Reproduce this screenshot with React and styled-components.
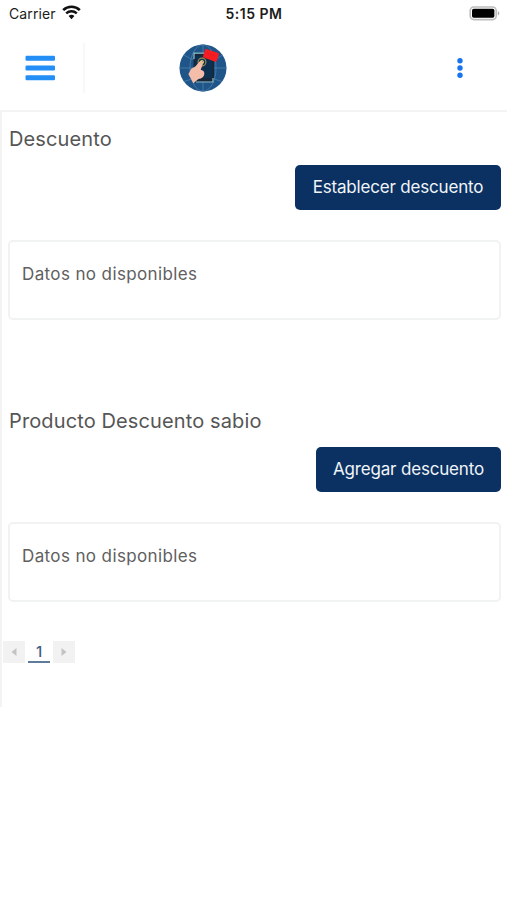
import styled, { createGlobalStyle } from "styled-components";

const GlobalStyle = createGlobalStyle`
  * {
    box-sizing: border-box;
  }

  body {
    margin: 0;
    background: #ffffff;
    font-family: Inter, "Liberation Sans", sans-serif;
  }
`;

const Screen = styled.div`
  min-height: 900px;
  background: #ffffff;
`;

const StatusBar = styled.div`
  display: grid;
  grid-template-columns: 1fr auto 1fr;
  align-items: center;
  height: 27px;
  padding: 0 7px 0 9px;
  color: #1c1c1c;
`;

const Carrier = styled.div`
  display: flex;
  align-items: center;
  gap: 6px;
  font-size: 14px;
  letter-spacing: 0.1px;

  svg {
    margin-top: -2px;
  }
`;

const Clock = styled.div`
  margin-left: -1px;
  font-size: 14px;
  font-weight: 600;
  letter-spacing: 0.5px;
`;

const BatteryIcon = styled.svg`
  justify-self: end;
`;

const Header = styled.header`
  display: grid;
  grid-template-columns: 85px 1fr 94px;
  align-items: center;
  height: 85px;
  padding-bottom: 2px;
  border-bottom: 2px solid #f3f3f3;
`;

const MenuButton = styled.button`
  display: flex;
  align-items: center;
  height: 50px;
  padding: 0 0 0 25px;
  border: 0;
  border-right: 2px solid #f8f8f8;
  background: none;
`;

const LogoWrapper = styled.div`
  display: flex;
  padding-left: 94px;
`;

const MoreButton = styled.button`
  display: flex;
  justify-content: center;
  padding: 0;
  border: 0;
  background: none;
`;

const Content = styled.main`
  height: 595px;
  border-left: 2px solid #f3f3f3;
`;

const Section = styled.section`
  height: 282px;
  padding: 13px 6px 0 6px;
`;

const Title = styled.h2`
  margin: 0 0 12px 1px;
  font-size: 20px;
  font-weight: 400;
  line-height: 28px;
  letter-spacing: 0.12px;
  color: #565656;
`;

const Actions = styled.div`
  display: flex;
  justify-content: flex-end;
`;

const Button = styled.button`
  width: ${({ $width }) => $width};
  height: 45px;
  padding: 0 0 1px;
  border: 0;
  border-radius: 5px;
  background: #0a3161;
  color: #f0f4f8;
  font-family: inherit;
  font-size: 17px;
  letter-spacing: -0.18px;
  white-space: nowrap;
`;

const Card = styled.div`
  height: 80px;
  margin-top: 30px;
  padding: 20px 12px;
  border: 2px solid #f1f2f2;
  border-radius: 5px;
  font-size: 17px;
  line-height: 24px;
  letter-spacing: 0.38px;
  color: #606060;
`;

const Pagination = styled.nav`
  display: flex;
  gap: 3px;
  margin-top: -35px;
  padding-left: 1px;
`;

const PageArrow = styled.button`
  display: flex;
  align-items: center;
  justify-content: center;
  width: 22px;
  height: 22px;
  padding: 0;
  border: 0;
  background: #f2f2f3;
`;

const PageNumber = styled.span`
  width: 22px;
  height: 22px;
  border-bottom: 2px solid #5d7c9c;
  color: #405b80;
  font-size: 15px;
  font-weight: 500;
  line-height: 22px;
  text-align: center;
`;

function WifiIcon() {
  return (
    <svg width="19" height="15" viewBox="0 0 19 15" fill="none">
      <path d="M1.2 5.1a12 12 0 0 1 16.6 0" stroke="#111" strokeWidth="2.7" />
      <path d="M4.2 8.3a7.7 7.7 0 0 1 10.6 0" stroke="#111" strokeWidth="2.4" />
      <path d="M6.6 11.1a4.2 4.2 0 0 1 5.8 0L9.5 14.2z" fill="#111" />
    </svg>
  );
}

function Battery() {
  return (
    <BatteryIcon width="31" height="15" viewBox="0 0 31 15">
      <rect x="1.2" y="1" width="26" height="12.6" rx="3.6" fill="#fff" stroke="#bdbdbd" strokeWidth="1.6" />
      <rect x="3" y="2.8" width="22.4" height="9" rx="1.7" fill="#000" />
      <path d="M28.8 5.2c2 .7 2 3.5 0 4.2z" fill="#adadad" />
    </BatteryIcon>
  );
}

function MenuIcon() {
  return (
    <svg width="31" height="26" viewBox="0 0 31 26" fill="#238ff6">
      <rect x="0.5" y="0.8" width="29.5" height="5" rx="1.2" />
      <rect x="0.5" y="10.5" width="29.5" height="5" rx="1.2" />
      <rect x="0.5" y="20.2" width="29.5" height="5" rx="1.2" />
    </svg>
  );
}

function Logo() {
  return (
    <svg width="48" height="48" viewBox="0 0 48 48">
      <circle cx="24" cy="24" r="23.5" fill="#1f5589" />
      <g fill="none" stroke="#4b80ab" strokeWidth="0.8">
        <path d="M.5 24h47M24 .5v47M5 11q7 5 12 5M43.5 11q-5 4-10 5M5 37.5q19-8 38 0" />
        <ellipse cx="24" cy="24" rx="13" ry="23.2" />
      </g>
      <rect x="14.5" y="8.5" width="20.5" height="30" rx="1.8" fill="#17283d" />
      <rect x="16.5" y="12" width="16.8" height="22" fill="#0c3150" />
      <path d="M15 15V9.2h12M17 38h17v-4" fill="none" stroke="#8fc6d8" strokeWidth="1.2" />
      <circle cx="23" cy="18" r="3.9" fill="none" stroke="#9d8a50" strokeWidth="1.2" />
      <path
        d="M20.4 17.8c1.5-2 4.5-.6 3.7 1.8l-2.4 6.2 2.4 1c1.8 1.2 1.6 4.5-.1 6.2-1.2 1.3-3.1 1.7-4.9 2.2l-4.7 4-5-9 2.6-5.3 4.6-2.6z"
        fill="#f4bdaa"
      />
      <circle cx="23" cy="18" r="1.7" fill="none" stroke="#dcc281" strokeWidth="0.9" />
      <path d="m27.5 4.9 11.6 4q1.2.4.8 1.6l-2.2 6.4q-.4 1.2-1.6.8l-11.4-4.2q-1-.4-.6-1.5l2-6.3q.4-1.2 1.4-.8z" fill="#f51c22" />
      <path d="m28.2 9.2 8.2 3" stroke="#d41c24" strokeWidth="1" strokeDasharray="2 1" />
    </svg>
  );
}

function MoreIcon() {
  return (
    <svg width="8" height="22" viewBox="0 0 8 22" fill="#1675ee">
      <circle cx="4" cy="3.7" r="2.7" />
      <circle cx="4" cy="11" r="2.7" />
      <circle cx="4" cy="18.3" r="2.7" />
    </svg>
  );
}

function DiscountSection({ title, action, width }) {
  return (
    <Section>
      <Title>{title}</Title>
      <Actions>
        <Button type="button" $width={width}>
          {action}
        </Button>
      </Actions>
      <Card>Datos no disponibles</Card>
    </Section>
  );
}

function App() {
  return (
    <>
      <GlobalStyle />
      <Screen>
        <StatusBar>
          <Carrier>
            Carrier
            <WifiIcon />
          </Carrier>
          <Clock>5:15 PM</Clock>
          <Battery />
        </StatusBar>

        <Header>
          <MenuButton type="button">
            <MenuIcon />
          </MenuButton>
          <LogoWrapper>
            <Logo />
          </LogoWrapper>
          <MoreButton type="button">
            <MoreIcon />
          </MoreButton>
        </Header>

        <Content>
          <DiscountSection
            title="Descuento"
            action="Establecer descuento"
            width="206px"
          />
          <DiscountSection
            title="Producto Descuento sabio"
            action="Agregar descuento"
            width="185px"
          />
          <Pagination>
            <PageArrow type="button">
              <svg width="6" height="8" viewBox="0 0 6 8">
                <path d="M5.5 0v8L.5 4z" fill="#c3c3c3" />
              </svg>
            </PageArrow>
            <PageNumber>1</PageNumber>
            <PageArrow type="button">
              <svg width="6" height="8" viewBox="0 0 6 8">
                <path d="M.5 0v8l5-4z" fill="#c3c3c3" />
              </svg>
            </PageArrow>
          </Pagination>
        </Content>
      </Screen>
    </>
  );
}

export default App;
